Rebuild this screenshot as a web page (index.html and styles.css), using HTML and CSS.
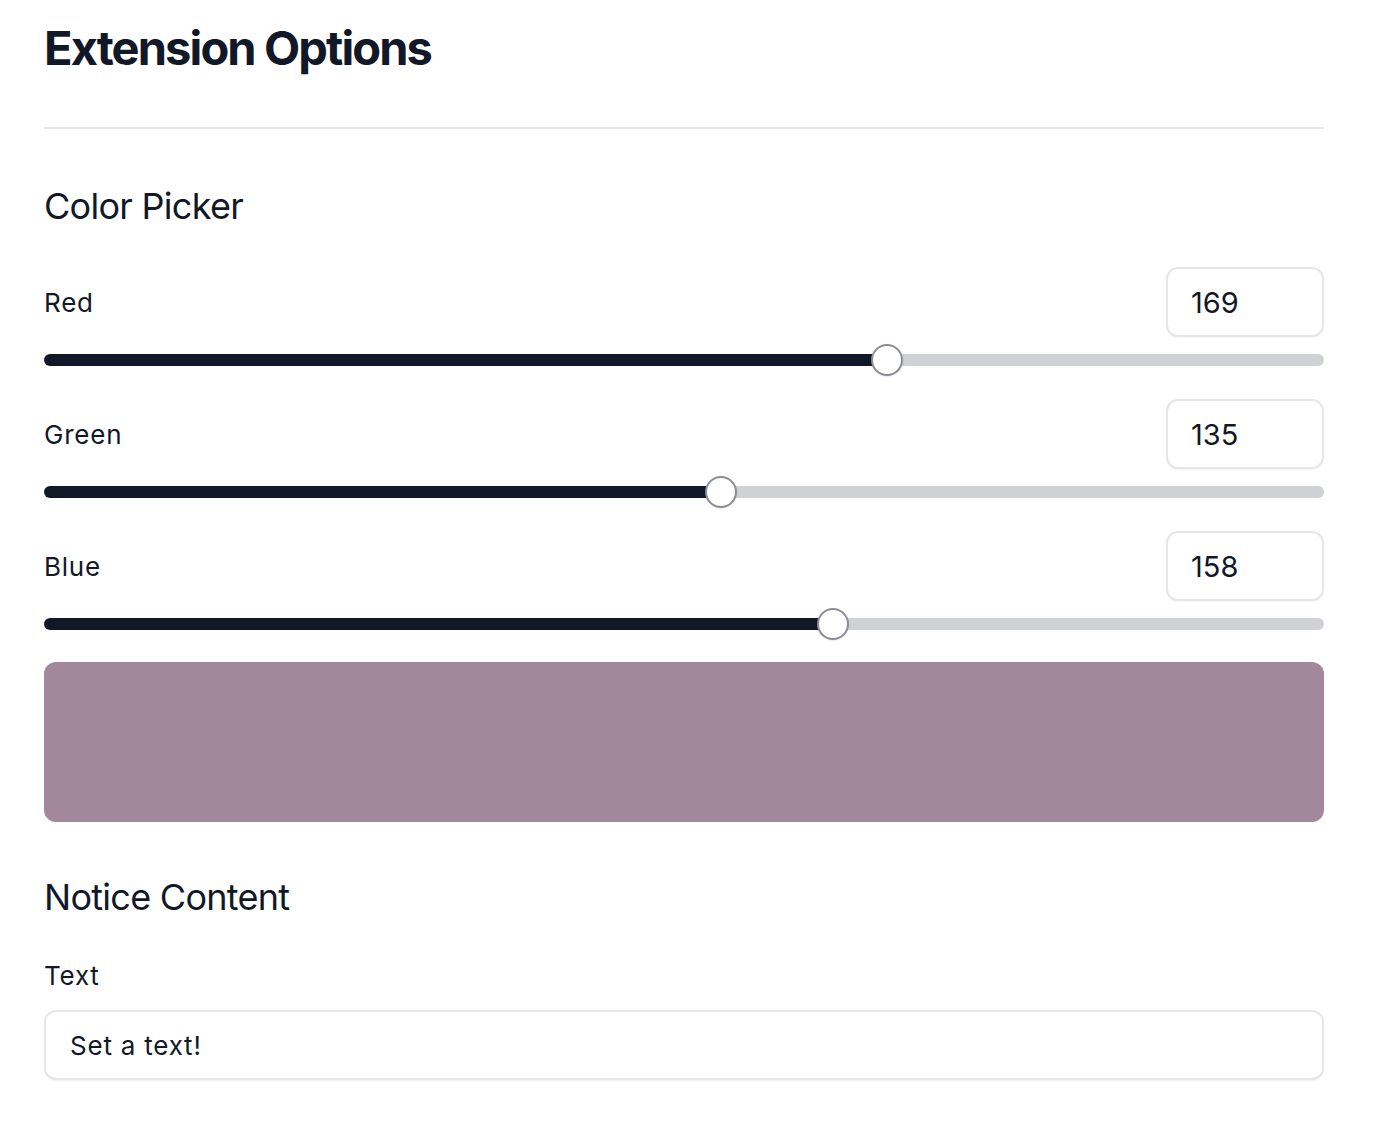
FILE: index.html
```html
<!DOCTYPE html>
<html lang="en">
<head>
<meta charset="utf-8">
<title>Extension Options</title>
<link rel="stylesheet" href="styles.css">
</head>
<body>
<main class="page">
  <h1 class="title">Extension Options</h1>
  <hr class="divider">

  <section class="section">
    <h2 class="section-title">Color Picker</h2>

    <div class="field">
      <div class="field-row">
        <label class="label" for="red">Red</label>
        <input class="num-input" type="text" value="169" aria-label="Red value">
      </div>
      <input class="slider" id="red" type="range" min="0" max="255" value="169" style="--v:0.66275">
    </div>

    <div class="field">
      <div class="field-row">
        <label class="label" for="green">Green</label>
        <input class="num-input" type="text" value="135" aria-label="Green value">
      </div>
      <input class="slider" id="green" type="range" min="0" max="255" value="135" style="--v:0.52941">
    </div>

    <div class="field">
      <div class="field-row">
        <label class="label" for="blue">Blue</label>
        <input class="num-input" type="text" value="158" aria-label="Blue value">
      </div>
      <input class="slider" id="blue" type="range" min="0" max="255" value="158" style="--v:0.61961">
    </div>

    <div class="swatch" style="background-color: #a3889c"></div>
  </section>

  <section class="section notice">
    <h2 class="section-title">Notice Content</h2>
    <label class="label text-label" for="notice">Text</label>
    <input class="text-input" id="notice" type="text" value="Set a text!">
  </section>
</main>
</body>
</html>
```

FILE: styles.css
```css
* {
  box-sizing: border-box;
}

html, body {
  margin: 0;
  padding: 0;
  background: #ffffff;
}

body {
  font-family: Inter, "Noto Sans", "Liberation Sans", sans-serif;
  color: #111827;
}

.page {
  width: 1280px;
  margin-left: 44px;
  padding-bottom: 40px;
}

.title {
  margin: 24px 0 0;
  font-size: 47px;
  line-height: 47px;
  font-weight: 700;
  letter-spacing: -0.04em;
}

.divider {
  margin: 56px 0 0;
  border: 0;
  height: 2px;
  background: #e5e7eb;
}

.section-title {
  margin: 59px 0 0;
  font-size: 36px;
  line-height: 37.5px;
  font-weight: 400;
  letter-spacing: -0.02em;
}

.field {
  display: flex;
  flex-direction: column;
}

.section .field:first-of-type {
  margin-top: 41.5px;
}

.field-row {
  display: flex;
  align-items: center;
  justify-content: space-between;
  height: 70px;
}

.label {
  font-size: 26px;
  line-height: 25px;
  font-weight: 400;
  letter-spacing: 0.03em;
}

.num-input,
.text-input {
  font-family: inherit;
  color: #111827;
  height: 70px;
  border: 2px solid #e5e7eb;
  border-radius: 12px;
  background: #fff;
  box-shadow: 0 1px 2px rgba(0, 0, 0, 0.05);
  outline: none;
  margin: 0;
}

.num-input {
  width: 158px;
  padding: 0 23px;
  font-size: 29px;
}

.slider {
  -webkit-appearance: none;
  appearance: none;
  display: block;
  width: 100%;
  height: 32px;
  margin: 7px 0 23px;
  padding: 0;
  background: transparent;
}

.slider::-webkit-slider-runnable-track {
  height: 12px;
  border-radius: 6px;
  background: linear-gradient(to right,
    #111827 calc(16px + (100% - 32px) * var(--v)),
    #d0d1d5 calc(16px + (100% - 32px) * var(--v)));
}

.slider::-webkit-slider-thumb {
  -webkit-appearance: none;
  appearance: none;
  width: 32px;
  height: 32px;
  margin-top: -10px;
  border-radius: 50%;
  background: #ffffff;
  border: 2px solid #8b8c96;
  box-shadow: 0 1px 2px rgba(0, 0, 0, 0.08);
}

.swatch {
  height: 160px;
  margin-top: -1px;
  border-radius: 12px;
}

.notice .section-title {
  margin-top: 57px;
}

.text-label {
  display: block;
  margin-top: 46px;
}

.text-input {
  display: block;
  width: 100%;
  margin-top: 22.5px;
  padding: 0 24px;
  font-size: 26px;
  letter-spacing: 0.03em;
}
```
